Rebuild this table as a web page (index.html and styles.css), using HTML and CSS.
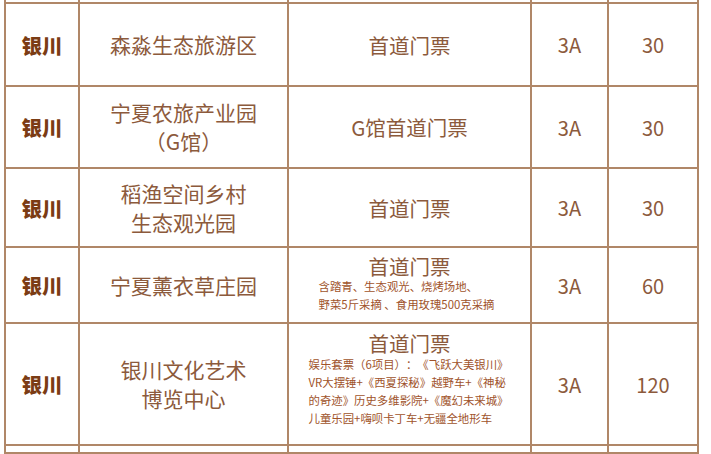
FILE: index.html
```html
<!DOCTYPE html>
<html lang="zh-CN">
<head>
<meta charset="utf-8">
<title>银川景区门票</title>
<link rel="stylesheet" href="styles.css">
</head>
<body>
<table class="tickets">
  <colgroup>
    <col class="c-city"><col class="c-name"><col class="c-item"><col class="c-level"><col class="c-price">
  </colgroup>
  <tbody>
    <tr class="row-cut"><td></td><td></td><td></td><td></td><td></td></tr>
    <tr class="r1">
      <td class="city">银川</td>
      <td class="name">森淼生态旅游区</td>
      <td class="item"><div class="main">首道门票</div></td>
      <td class="num">3A</td>
      <td class="num">30</td>
    </tr>
    <tr class="r2">
      <td class="city">银川</td>
      <td class="name">宁夏农旅产业园<br>（G馆）</td>
      <td class="item"><div class="main">G馆首道门票</div></td>
      <td class="num">3A</td>
      <td class="num">30</td>
    </tr>
    <tr class="r3">
      <td class="city">银川</td>
      <td class="name">稻渔空间乡村<br>生态观光园</td>
      <td class="item"><div class="main">首道门票</div></td>
      <td class="num">3A</td>
      <td class="num">30</td>
    </tr>
    <tr class="r4">
      <td class="city">银川</td>
      <td class="name">宁夏薰衣草庄园</td>
      <td class="item">
        <div class="main">首道门票</div>
        <div class="note">含踏青、生态观光、烧烤场地、<br>野菜5斤采摘 、食用玫瑰500克采摘</div>
      </td>
      <td class="num">3A</td>
      <td class="num">60</td>
    </tr>
    <tr class="r5">
      <td class="city">银川</td>
      <td class="name">银川文化艺术<br>博览中心</td>
      <td class="item">
        <div class="main">首道门票</div>
        <div class="note">娱乐套票（6项目）：《飞跃大美银川》<br>VR大摆锤+《西夏探秘》越野车+《神秘<br>的奇迹》历史多维影院+《魔幻未来城》<br>儿童乐园+嗨呗卡丁车+无疆全地形车</div>
      </td>
      <td class="num">3A</td>
      <td class="num">120</td>
    </tr>
    <tr class="row-cut"><td></td><td></td><td></td><td></td><td></td></tr>
  </tbody>
</table>
</body>
</html>
```

FILE: styles.css
```css
html, body {
  margin: 0;
  padding: 0;
  background: #ffffff;
}
body {
  padding-left: 4px;
  font-family: "Noto Sans CJK SC", "Noto Sans", sans-serif;
  color: #8c5a3c;
  overflow: hidden;
  height: 454px;
  text-spacing-trim: space-all;
}
.tickets {
  border-collapse: collapse;
  table-layout: fixed;
  width: 695px;
  margin-top: -6px;
}
.c-city { width: 74px; }
.c-name { width: 209px; }
.c-item { width: 243px; }
.c-level { width: 77px; }
.c-price { width: 90px; }
.tickets td {
  border: 2px solid #b08768;
  padding: 0;
  text-align: center;
  vertical-align: middle;
}
.row-cut td { height: 6px; }
.r1 td { height: 81px; }
.r2 td { height: 80px; }
.r3 td { height: 77px; }
.r4 td { height: 74px; }
.r5 td { height: 120px; }
.city {
  font-size: 20.5px;
  font-weight: 900;
  color: #7b3c14;
}
.name {
  font-size: 21px;
  line-height: 29px;
}
.item .main {
  font-size: 20.5px;
  line-height: 24px;
}
.num {
  font-size: 20px;
}
.note {
  display: block;
  width: fit-content;
  margin: 0 auto;
  text-align: left;
  font-size: 11.4px;
  line-height: 17.5px;
  color: #a0532b;
  white-space: nowrap;
}
.r4 .note { padding-right: 6px; margin-bottom: 3px; }
.r5 .note { line-height: 18px; padding-right: 2px; margin-bottom: 10px; }
```
